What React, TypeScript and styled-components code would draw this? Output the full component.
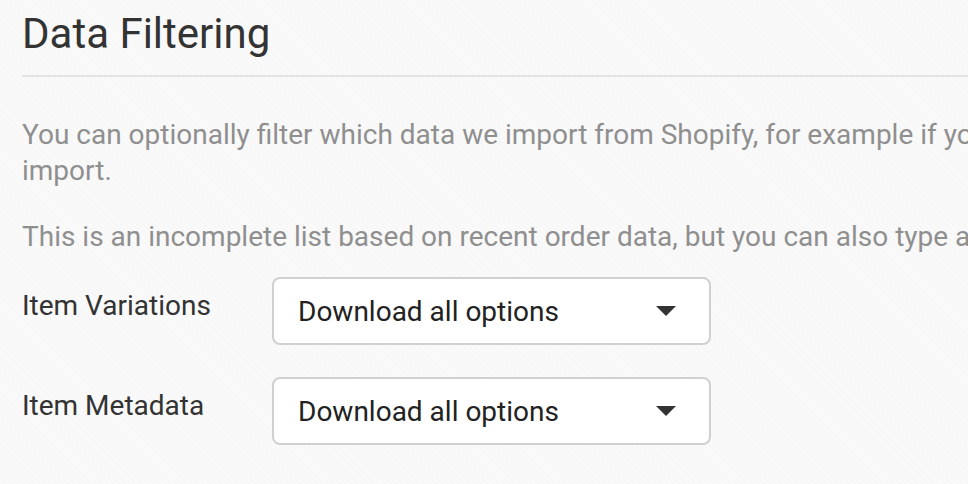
import styled, { createGlobalStyle } from 'styled-components';

const GlobalStyle = createGlobalStyle`
  html, body {
    margin: 0;
    padding: 0;
    background-color: #fafafa;
    overflow: hidden;
  }
  body {
    font-family: Roboto, "Noto Sans", Arial, sans-serif;
    -webkit-font-smoothing: antialiased;
  }
`;

const Page = styled.div`
  width: 1200px;
  height: 484px;
  padding: 0 0 0 22px;
  box-sizing: border-box;
  background-color: #fafafa;
  background-image: repeating-linear-gradient(
    45deg,
    rgba(0, 0, 0, 0.012) 0 2px,
    transparent 2px 4px
  );
`;

const Title = styled.h2`
  margin: 0;
  padding-top: 10px;
  padding-bottom: 17px;
  font-size: 42px;
  line-height: 48px;
  font-weight: 400;
  color: #333333;
  border-bottom: 2px solid #e3e3e3;
`;

const Paragraph = styled.p`
  margin: 0;
  font-size: 28px;
  line-height: 36px;
  color: #8f8f8f;
  white-space: nowrap;
`;

const Intro = styled.div`
  display: flex;
  flex-direction: column;
  gap: 30px;
  padding-top: 40px;
`;

const FieldList = styled.div`
  display: flex;
  flex-direction: column;
  gap: 32px;
  padding-top: 22px;
`;

const FieldRow = styled.div`
  display: grid;
  grid-template-columns: 250px 439px;
  align-items: start;
`;

const Label = styled.label`
  font-size: 28px;
  line-height: 32px;
  color: #333333;
  padding-top: 13px;
`;

const Select = styled.div`
  height: 68px;
  box-sizing: border-box;
  display: flex;
  align-items: center;
  justify-content: space-between;
  padding: 0 33px 0 24px;
  background: #ffffff;
  border: 2px solid #d0d0d0;
  border-radius: 8px;
  font-size: 28px;
  color: #222222;
`;

const Caret = () => (
  <svg width="20" height="10" viewBox="0 0 20 10" aria-hidden="true">
    <path d="M0 0 L20 0 L10 10 Z" fill="#333333" />
  </svg>
);

const fields = ['Item Variations', 'Item Metadata'];

export default function App() {
  return (
    <>
      <GlobalStyle />
      <Page>
        <Title>Data Filtering</Title>
        <Intro>
          <Paragraph>
            You can optionally filter which data we import from Shopify, for example if you only want some of the data to
            <br />
            import.
          </Paragraph>
          <Paragraph>
            This is an incomplete list based on recent order data, but you can also type any value you want.
          </Paragraph>
        </Intro>
        <FieldList>
          {fields.map((f) => (
            <FieldRow key={f}>
              <Label>{f}</Label>
              <Select>
                <span>Download all options</span>
                <Caret />
              </Select>
            </FieldRow>
          ))}
        </FieldList>
      </Page>
    </>
  );
}
